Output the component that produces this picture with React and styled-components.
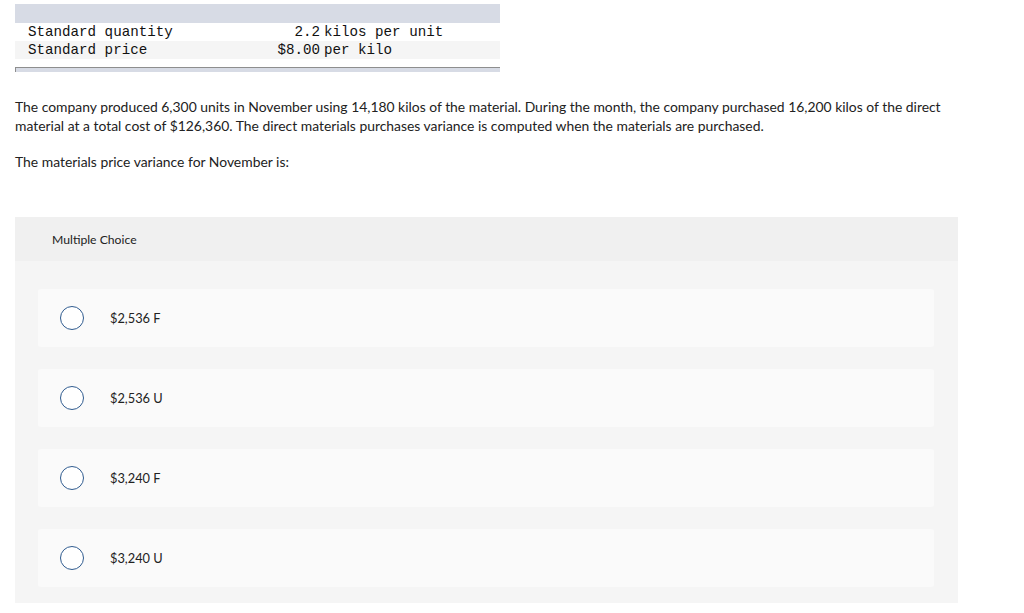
import React from "react";
import styled, { createGlobalStyle } from "styled-components";

const GlobalStyle = createGlobalStyle`
  body {
    margin: 0;
    background: #ffffff;
    font-family: Lato, "Open Sans", sans-serif;
    color: #222222;
  }
`;

const Page = styled.div`
  padding: 4px 15px 0 15px;
  width: 943px;
`;

const DataTable = styled.div`
  width: 485px;
`;

const TableHead = styled.div`
  height: 19px;
  background: #d7dbe5;
`;

const TableRow = styled.div`
  display: flex;
  height: 18px;
  align-items: center;
  white-space: nowrap;
  background: ${p => (p.$striped ? "#f5f5f5" : "#ffffff")};
  font-family: "Liberation Mono", "Courier New", monospace;
  font-size: 14.2px;
  color: #111111;
`;

const Label = styled.span`
  width: 217px;
  padding-left: 13px;
`;

const Amount = styled.span`
  width: 75px;
  text-align: right;
`;

const Unit = styled.span`
  margin-left: 4px;
`;

const TableFoot = styled.div`
  margin-top: 8px;
  height: 4px;
  border-top: 1px solid #8e8e8e;
  border-left: 1px solid #8e8e8e;
  background: #d7dbe5;
`;

const Paragraph = styled.p`
  margin: ${p => p.$top || 0}px 0 0 0;
  font-size: 13.9px;
  line-height: 19px;
`;

const ChoicePanel = styled.div`
  margin-top: 46px;
  background: #f5f5f5;
  padding-bottom: 16px;
`;

const PanelHeader = styled.div`
  height: 44px;
  display: flex;
  align-items: center;
  padding-left: 37px;
  background: #f0f0f0;
  font-size: 12.2px;
  color: #222222;
`;

const OptionList = styled.div`
  display: flex;
  flex-direction: column;
  gap: 22px;
  padding: 28px 24px 0 23px;
`;

const Option = styled.div`
  height: 58px;
  display: flex;
  align-items: center;
  background: #fafafa;
  border-radius: 3px;
  padding-left: 22px;
`;

const Radio = styled.span`
  width: 24px;
  height: 24px;
  border: 1px solid #2f5b8f;
  border-radius: 50%;
  background: #ffffff;
  box-sizing: border-box;
  flex: none;
`;

const OptionText = styled.span`
  margin-left: 26px;
  font-size: 12.8px;
  color: #222222;
`;

const choices = ["$2,536 F", "$2,536 U", "$3,240 F", "$3,240 U"];

export default function App() {
  return (
    <>
      <GlobalStyle />
      <Page>
        <DataTable>
          <TableHead />
          <TableRow>
            <Label>Standard quantity</Label>
            <Amount>2.2</Amount>
            <Unit>kilos per unit</Unit>
          </TableRow>
          <TableRow $striped>
            <Label>Standard price</Label>
            <Amount>$8.00</Amount>
            <Unit>per kilo</Unit>
          </TableRow>
          <TableFoot />
        </DataTable>
        <Paragraph $top={25}>
          The company produced 6,300 units in November using 14,180 kilos of the material. During the month, the company purchased 16,200 kilos of the direct material at a total cost of $126,360. The direct materials purchases variance is computed when the materials are purchased.
        </Paragraph>
        <Paragraph $top={17}>The materials price variance for November is:</Paragraph>
        <ChoicePanel>
          <PanelHeader>Multiple Choice</PanelHeader>
          <OptionList>
            {choices.map(c => (
              <Option key={c}>
                <Radio />
                <OptionText>{c}</OptionText>
              </Option>
            ))}
          </OptionList>
        </ChoicePanel>
      </Page>
    </>
  );
}
